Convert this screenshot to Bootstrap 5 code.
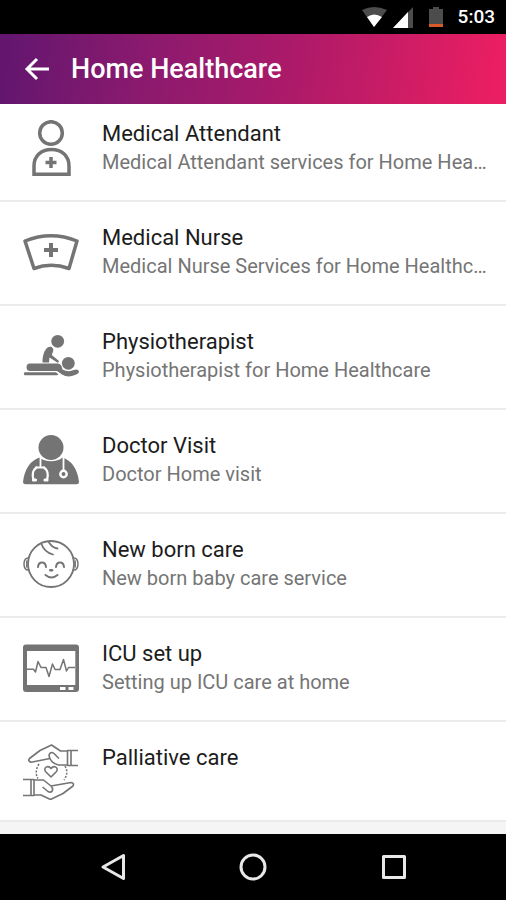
<!DOCTYPE html>
<html lang="en">
<head>
<meta charset="utf-8">
<meta name="viewport" content="width=device-width, initial-scale=1">
<title>Home Healthcare</title>
<link href="https://cdn.jsdelivr.net/npm/bootstrap@5.3.0/dist/css/bootstrap.min.css" rel="stylesheet">
<style>
  body { font-family: Roboto, "Liberation Sans", sans-serif; background: #f5f5f5; }
  .status-bar { height: 34px; padding: 0 11px; background: #000; color: #fff; font-size: 19px; font-weight: 500; }
  .app-bar { height: 70px; padding: 0 20px; gap: 17px; background: linear-gradient(97deg, #64166f 2%, #8a1a6e 28%, #ab1a69 57%, #ea1e62 97%); }
  .app-bar h1 { font-size: 27px; line-height: 32px; font-weight: 500; }
  .service { padding: 20px 18px 22px 23px; gap: 23px; border-bottom: 2px solid #ebebeb; background: #fff; color: #1c1c1c; min-height: 104px; }
  .service-first { padding-top: 14px; min-height: 98px; }
  .service-last { min-height: 100px; padding-bottom: 18px; }
  .service svg { color: #747474; margin-top: 2px; }
  .service h2 { font-size: 22px; line-height: 32px; font-weight: 400; }
  .service p { font-size: 20px; line-height: 24px; color: #757575; }
  .system-nav { height: 66px; padding: 0 19%; background: #000; }
</style>
<script src="https://cdn.jsdelivr.net/npm/bootstrap@5.3.0/dist/js/bootstrap.bundle.min.js" defer></script>
</head>
<body class="d-flex flex-column min-vh-100">

<div class="status-bar d-flex align-items-center justify-content-end">
  <svg width="84" height="24" viewBox="0 0 84 24" aria-hidden="true">
    <path d="M0 5Q12-1 25 5L12 22Z" fill="#4c4c4c"/>
    <path d="M5 12Q12 7 20 12L12 22Z" fill="#fff"/>
    <path d="M51 2V23H31Z" fill="#4c4c4c"/>
    <path d="M46 7V23H31Z" fill="#fff"/>
    <path d="M71 2h6v2h4v15H67V4h4Z" fill="#4c4c4c"/>
    <path d="M67 19h14v3H67Z" fill="#d9592b"/>
  </svg>
  <span class="ms-2 ps-1">5:03</span>
</div>

<header class="app-bar d-flex align-items-center text-white">
  <button type="button" class="btn p-0 border-0 text-white d-flex" aria-label="Back">
    <svg width="34" height="34" viewBox="0 0 34 34" fill="none" stroke="currentColor" stroke-width="3"><path d="M29 17H8M17 7L7 17L17 27"/></svg>
  </button>
  <h1 class="m-0 text-truncate">Home Healthcare</h1>
</header>

<main class="flex-grow-1">
  <a href="#attendant" class="service service-first d-flex align-items-start text-decoration-none">
    <svg class="flex-shrink-0" width="56" height="56" viewBox="0 0 56 56" fill="none" stroke="currentColor" stroke-width="3.5" aria-hidden="true">
      <circle cx="28" cy="13" r="11.3"/>
      <path d="M11 54.3V46C11 36 18 29.5 28.500 29.500S46 36 46 46V54.300Z"/>
      <path d="M28 37V48M22.500 42.500H33.500"/>
    </svg>
    <div class="flex-grow-1 overflow-hidden"><h2 class="m-0 text-truncate">Medical Attendant</h2><p class="m-0 text-truncate">Medical Attendant services for Home Healthcare</p></div>
  </a>
  <a href="#nurse" class="service d-flex align-items-start text-decoration-none">
    <svg class="flex-shrink-0" width="56" height="56" viewBox="0 0 56 56" fill="none" stroke="currentColor" stroke-width="3.5" stroke-linejoin="round" aria-hidden="true">
      <path d="M2 17Q28 6.500 54 17L46 44.500Q28 38 11 44.500Z"/>
      <path d="M28 19V33M21 26H35" stroke-width="4"/>
    </svg>
    <div class="flex-grow-1 overflow-hidden"><h2 class="m-0 text-truncate">Medical Nurse</h2><p class="m-0 text-truncate">Medical Nurse Services for Home Healthcare</p></div>
  </a>
  <a href="#physio" class="service d-flex align-items-start text-decoration-none">
    <svg class="flex-shrink-0" width="56" height="56" viewBox="0 0 56 56" fill="currentColor" aria-hidden="true">
      <circle cx="34.700" cy="13.300" r="6.400"/>
      <circle cx="45.300" cy="35.300" r="6.400"/>
      <path d="M19.500 34.500C19.500 28 21 22.500 24.500 19.500C28 17.500 31 20 30.200 23L28.800 27L36 33L35 35L26.500 29.500L26 34.500Z"/>
      <path d="M7 35.500H35Q37.500 35.500 38.500 38L39.500 41.500Q45 44.500 49 42.500L53 41.500Q56 41.500 56 44Q55.500 46 52 47Q45 50 39 46.500L34 43H7Q3.500 43 3.500 39.300T7 35.500Z"/>
      <path d="M1.500 44.300H33L35.500 46.500L34 47.300H1.500Q0 46 1.500 44.300Z"/>
    </svg>
    <div class="flex-grow-1 overflow-hidden"><h2 class="m-0 text-truncate">Physiotherapist</h2><p class="m-0 text-truncate">Physiotherapist for Home Healthcare</p></div>
  </a>
  <a href="#doctor" class="service d-flex align-items-start text-decoration-none">
    <svg class="flex-shrink-0" width="56" height="56" viewBox="0 0 56 56" fill="none" aria-hidden="true">
      <circle cx="28" cy="15.500" r="12.500" fill="currentColor"/>
      <path d="M16.500 25.500C22 30.500 34 30.500 39.500 25.500C49 29 54.500 37 56 50Q56 52.300 53.500 52.300H2.500Q0 52.300 0 50C1.500 37 7 29 16.500 25.500Z" fill="currentColor"/>
      <g stroke="#fff" stroke-width="1.800" stroke-linecap="round">
        <path d="M17.500 25V35M13 35.500H21M40.500 25V38"/>
        <path d="M13.500 35.500C10 38 9 43 10.500 48M21 35.500C24.500 38 25.500 43 24 48" stroke-width="2.200"/>
        <path d="M10.500 48H12.500M24 48H22" stroke-width="3.200"/>
        <circle cx="40.500" cy="42" r="3.200" stroke-width="2.400"/>
      </g>
    </svg>
    <div class="flex-grow-1 overflow-hidden"><h2 class="m-0 text-truncate">Doctor Visit</h2><p class="m-0 text-truncate">Doctor Home visit</p></div>
  </a>
  <a href="#newborn" class="service d-flex align-items-start text-decoration-none">
    <svg class="flex-shrink-0" width="56" height="56" viewBox="0 0 56 56" fill="none" stroke="currentColor" stroke-width="1.800" stroke-linecap="round" aria-hidden="true">
      <circle cx="28" cy="28" r="23"/>
      <path d="M5.800 22C2.500 21.500 1 24.500 1 28S2.500 34.500 5.800 34M3.800 25V31M50.200 22C53.500 21.500 55 24.500 55 28S53.500 34.500 50.200 34M52.200 25V31" stroke-width="1.500"/>
      <path d="M18.500 8C20.500 14 24.500 17 30 18.500M26 6.500C28 9.500 31 12 34.500 12.500"/>
      <path d="M15 31Q15.500 26.500 19 26.500T23 31M33 31Q33.500 26.500 37 26.500T41 31M22.500 39Q28.500 44 34.500 39" stroke-width="2"/>
      <path d="M27.300 34.200H29" stroke-width="2.500"/>
    </svg>
    <div class="flex-grow-1 overflow-hidden"><h2 class="m-0 text-truncate">New born care</h2><p class="m-0 text-truncate">New born baby care service</p></div>
  </a>
  <a href="#icu" class="service d-flex align-items-start text-decoration-none">
    <svg class="flex-shrink-0" width="56" height="56" viewBox="0 0 56 56" fill="none" aria-hidden="true">
      <path fill="currentColor" fill-rule="evenodd" d="M3 4.500H53Q56 4.500 56 7.500V49Q56 52 53 52H3Q0 52 0 49V7.500Q0 4.500 3 4.500ZM4 11V45H52.300V11ZM37 47V50H42.500V47ZM45.500 47V50H50.500V47Z"/>
      <path d="M4 29.300H10.500L12.500 32L15 21.500L18 27.500H23L26 36.500L29.500 24L32 29.500H37L40.500 19.500L43.500 31L45.500 27.500H52" stroke="currentColor" stroke-width="1.500" stroke-linejoin="round"/>
    </svg>
    <div class="flex-grow-1 overflow-hidden"><h2 class="m-0 text-truncate">ICU set up</h2><p class="m-0 text-truncate">Setting up ICU care at home</p></div>
  </a>
  <a href="#palliative" class="service service-last d-flex align-items-start text-decoration-none">
    <svg class="flex-shrink-0" width="56" height="56" viewBox="0 0 56 56" fill="none" stroke="currentColor" stroke-width="1.600" stroke-linejoin="round" aria-hidden="true">
      <path d="M55 6.500H44.500V21.500H55M48 6.500V21.500M44.500 7H37.500L28.500 1L17 6.500L6.500 14.500Q4.500 17 8 18.200L27 14.500Q29 19.500 35.500 21H44.500M27 14.500C24.500 10 28 7 31 9.500L36 14.500"/>
      <path d="M0 35.500H11V51.500H0M8 35.500V51.500M11 36H20.500L28 42L48 38.500Q51.500 39 50 42L40 49.500L27.500 55.500L18 51H11M28 42C31.500 46 28.500 49.500 25 47.500L19.500 43"/>
      <path d="M28 33L22.500 27.500C20 24 25 20.500 28 24.500C31 20.500 36 24 33.500 27.500Z"/>
      <path d="M16 20Q11 28 15 34.500M42 22Q46 29 41 36" stroke-width="1.500" stroke-dasharray="2 1.500"/>
    </svg>
    <div class="flex-grow-1 overflow-hidden"><h2 class="m-0 text-truncate">Palliative care</h2></div>
  </a>
</main>

<nav class="system-nav d-flex align-items-center justify-content-between" aria-label="System">
  <button type="button" class="btn p-0 border-0 d-flex" aria-label="Back"><svg width="32" height="28" viewBox="0 0 32 28" fill="none" stroke="#e8e8e8" stroke-width="3" stroke-linejoin="round"><path d="M27.500 2.500V25.500L7 14Z"/></svg></button>
  <button type="button" class="btn p-0 border-0 d-flex" aria-label="Home"><svg width="28" height="28" viewBox="0 0 28 28" fill="none" stroke="#e8e8e8" stroke-width="3"><circle cx="14" cy="14" r="12"/></svg></button>
  <button type="button" class="btn p-0 border-0 d-flex" aria-label="Recent apps"><svg width="32" height="28" viewBox="0 0 32 28" fill="none" stroke="#e8e8e8" stroke-width="3" stroke-linejoin="round"><path d="M5.500 3.500H26.500V24.500H5.500Z"/></svg></button>
</nav>
</body>
</html>
